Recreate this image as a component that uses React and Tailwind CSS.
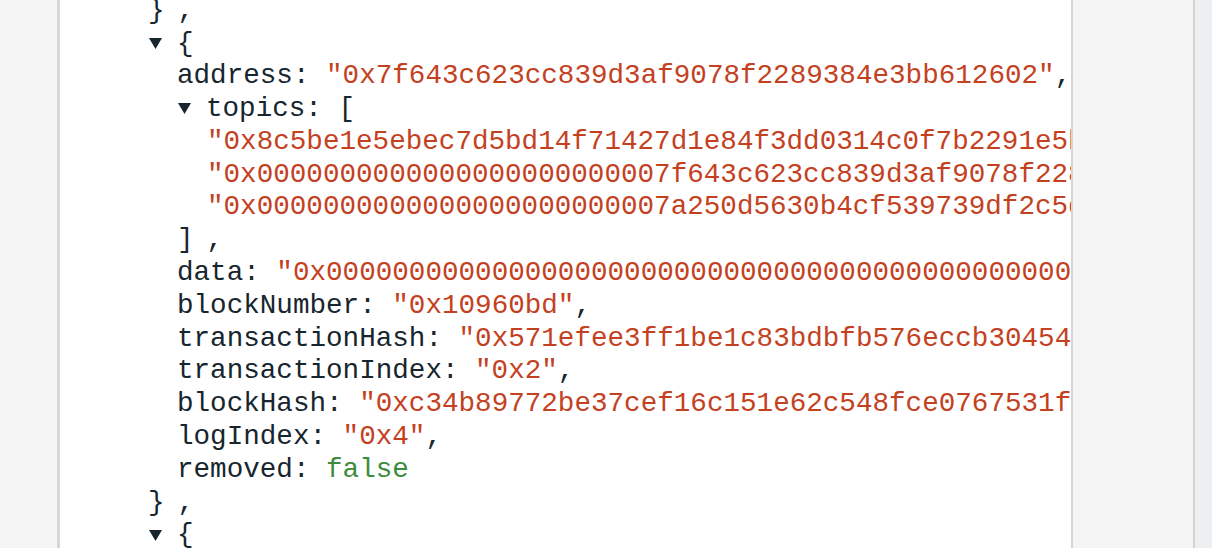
import React from "react";

const rows = [
  { depth: 0, parts: [["p", "}"], ["gap"], ["p", ","]] },
  { depth: 0, arrow: true, parts: [["p", "{"]] },
  { depth: 1, parts: [["k", "address: "], ["s", '"0x7f643c623cc839d3af9078f2289384e3bb612602"'], ["p", ","]] },
  { depth: 1, arrow: true, parts: [["k", "topics: ["]] },
  { depth: 2, parts: [["s", '"0x8c5be1e5ebec7d5bd14f71427d1e84f3dd0314c0f7b2291e5b200ac8c7c3b925"'], ["p", ","]] },
  { depth: 2, parts: [["s", '"0x0000000000000000000000007f643c623cc839d3af9078f2289384e3bb612602"'], ["p", ","]] },
  { depth: 2, parts: [["s", '"0x0000000000000000000000007a250d5630b4cf539739df2c5dacb4c659f2488d"']] },
  { depth: 1, parts: [["p", "]"], ["gap"], ["p", ","]] },
  { depth: 1, parts: [["k", "data: "], ["s", '"0x00000000000000000000000000000000000000000000000000000000000000000"'], ["p", ","]] },
  { depth: 1, parts: [["k", "blockNumber: "], ["s", '"0x10960bd"'], ["p", ","]] },
  { depth: 1, parts: [["k", "transactionHash: "], ["s", '"0x571efee3ff1be1c83bdbfb576eccb30454c4e0c1e2d4f29b7d1a4e6b1b6d5f70"'], ["p", ","]] },
  { depth: 1, parts: [["k", "transactionIndex: "], ["s", '"0x2"'], ["p", ","]] },
  { depth: 1, parts: [["k", "blockHash: "], ["s", '"0xc34b89772be37cef16c151e62c548fce0767531f5a3c1c0b8e7d9a2f4b6c8e01"'], ["p", ","]] },
  { depth: 1, parts: [["k", "logIndex: "], ["s", '"0x4"'], ["p", ","]] },
  { depth: 1, parts: [["k", "removed: "], ["b", "false"]] },
  { depth: 0, parts: [["p", "}"], ["gap"], ["p", ","]] },
  { depth: 0, arrow: true, parts: [["p", "{"]] },
];

const indent = ["pl-[88px]", "pl-[117px]", "pl-[147px]"];
const colors = { p: "text-[#17262e]", k: "text-[#17262e]", s: "text-[#c4411f]", b: "text-[#3d8c3d]" };

const Arrow = () => (
  <span className="inline-flex w-[29px] shrink-0 pl-[1px]">
    <svg width="13" height="11" viewBox="0 0 13 11">
      <polygon points="0,0 13,0 6.5,11" fill="#17262e" />
    </svg>
  </span>
);

const Row = ({ row }) => {
  const base = row.arrow ? indent[row.depth] : indent[row.depth];
  return (
    <div className={`flex items-center h-[32.8px] whitespace-pre ${base}`}>
      {row.arrow && <Arrow />}
      {row.parts.map((p, i) =>
        p[0] === "gap" ? (
          <span key={i} className="w-[13px]" />
        ) : (
          <span key={i} className={colors[p[0]]}>{p[1]}</span>
        )
      )}
    </div>
  );
};

export default function App() {
  return (
    <div className="flex h-[548px] w-[1212px] overflow-hidden bg-[#f5f5f5]">
      <div className="w-[57px] shrink-0 bg-[#f5f5f5]" />
      <div className="w-[1016px] shrink-0 bg-white border-l-[3px] border-r-[2px] border-[#d6d6d6] overflow-hidden">
        <div
          className="-mt-[6px] text-[27.6px] text-[#17262e]"
          style={{ fontFamily: '"Liberation Mono", "Courier New", monospace' }}
        >
          {rows.map((r, i) => (
            <Row key={i} row={r} />
          ))}
        </div>
      </div>
      <div className="w-[122px] shrink-0 bg-[#f5f5f6] border-r-[2px] border-[#d3d4d6]" />
      <div className="flex-1 bg-[#eeeff1]" />
    </div>
  );
}
